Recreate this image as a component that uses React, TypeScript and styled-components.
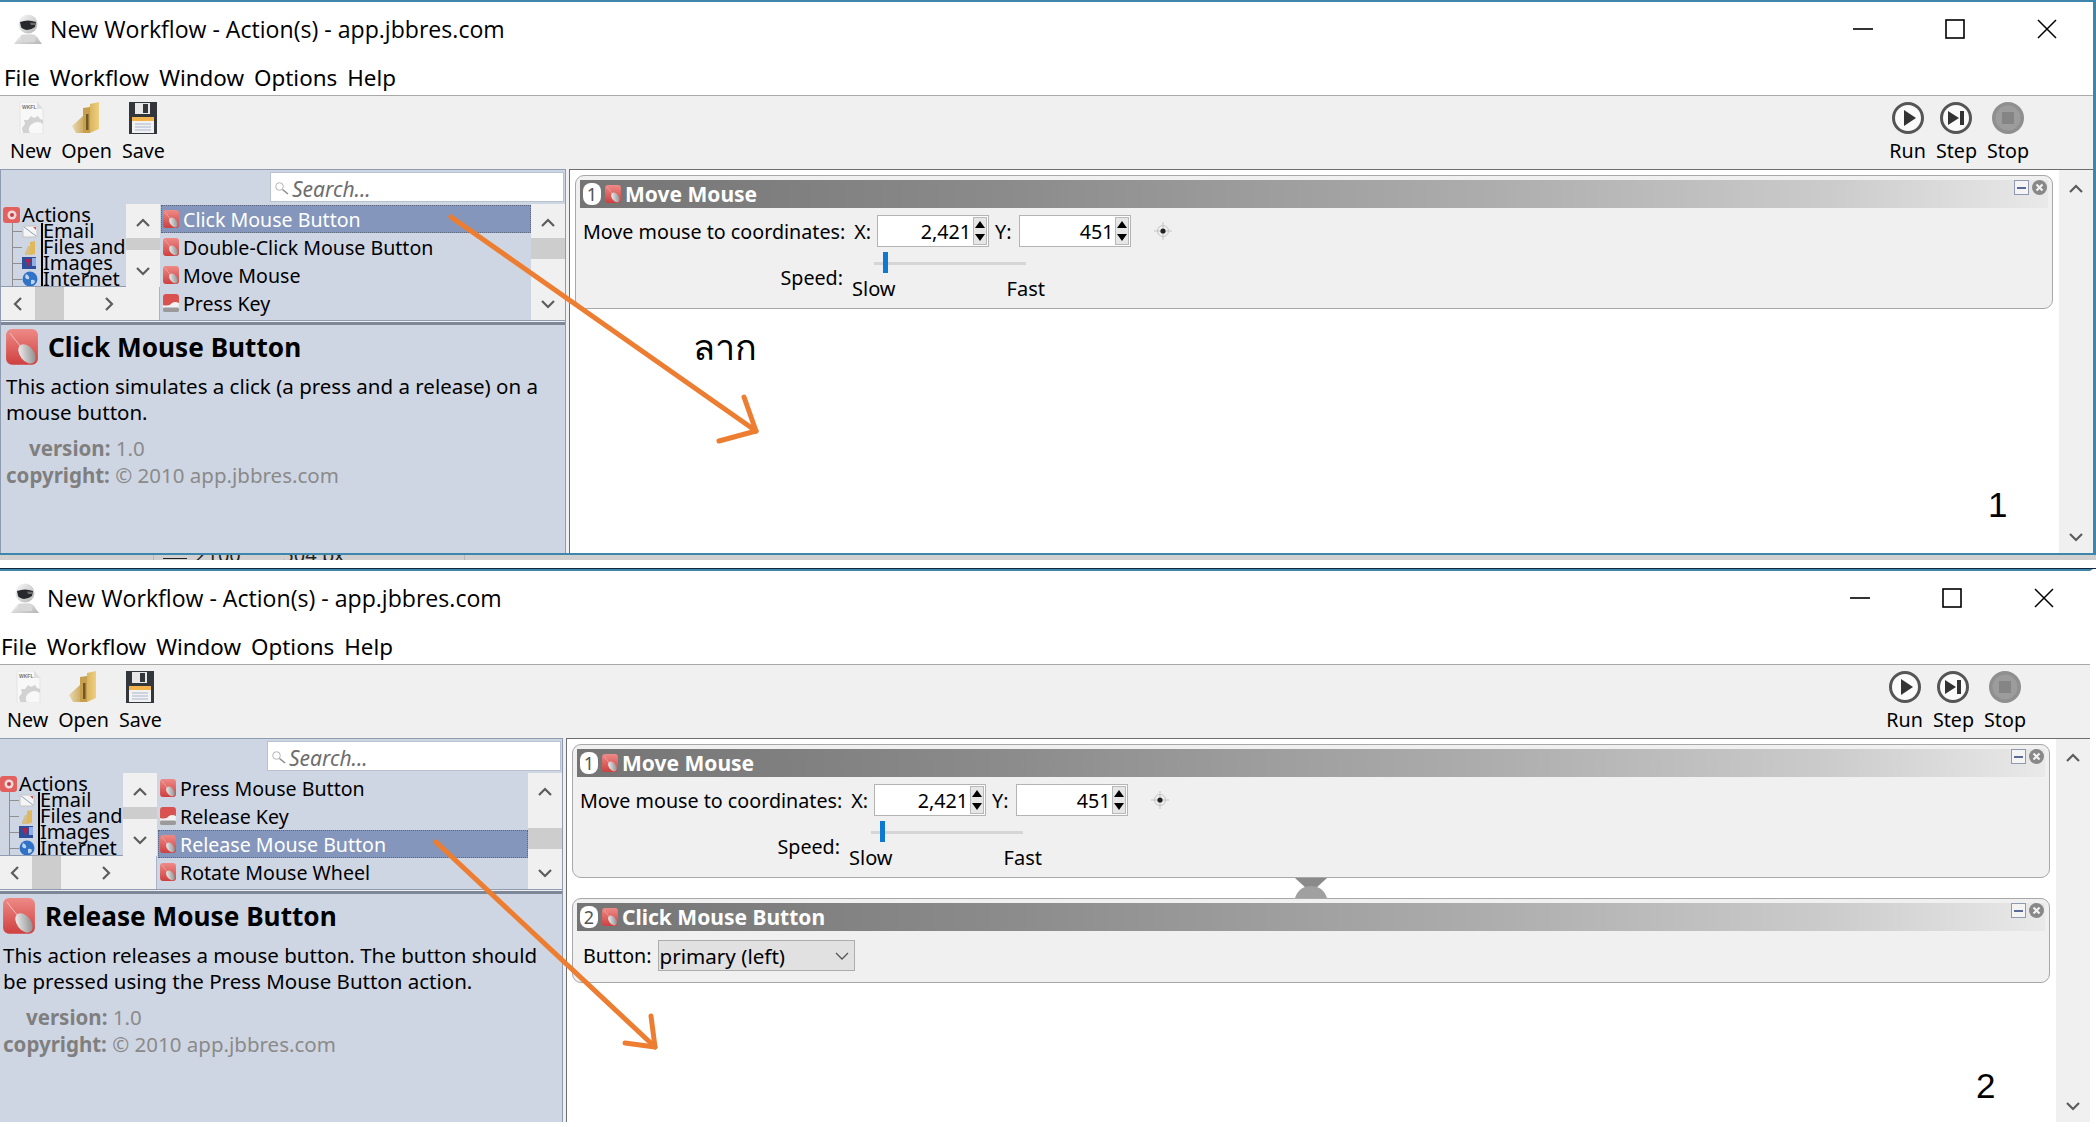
import * as React from 'react';
import styled, { createGlobalStyle } from 'styled-components';

const GlobalStyle = createGlobalStyle`
  html, body {
    margin: 0;
    padding: 0;
    background: #fff;
  }
  * { box-sizing: border-box; }
`

const UI_FONT = `"Noto Sans", "Liberation Sans", sans-serif`

const Page = styled.div`
  position: relative;
  width: 2096px;
  height: 1127px;
  overflow: hidden;
  background: #fff;
  font-family: ${UI_FONT};
  font-size: 19.7px;
  color: #000;
`

const WindowFrame = styled.div<{ $shift?: number; $edge?: boolean }>`
  width: 2096px;
  margin-left: ${p => -(p.$shift || 0)}px;
  border-top: 2px solid #3f86ad;
  border-right: ${p => (p.$edge ? '3px solid #3f86ad' : '3px solid transparent')};
  background: #fff;
`

const TitleBar = styled.div`
  height: 60px;
  padding: 0 35px 6px 13px;
  display: flex;
  align-items: center;
`

const TitleText = styled.div`
  margin-left: 7px;
  font-family: "Open Sans", "Noto Sans", sans-serif;
  font-size: 23.1px;
  flex: 1;
`

const WinControls = styled.div`
  display: flex;
  align-items: center;
  gap: 70px;
`

const MenuBar = styled.div`
  height: 34px;
  padding: 0 0 2px 4px;
  display: flex;
  align-items: center;
  gap: 10px;
  border-bottom: 1px solid #a9a9a9;
  font-size: 22.4px;
`

const Toolbar = styled.div`
  height: 73px;
  padding: 6px 64px 0 10px;
  display: flex;
  justify-content: space-between;
  background: #f0f0f0;
`

const ToolGroup = styled.div`
  display: flex;
  gap: 10px;
`

const ToolButton = styled.div`
  display: flex;
  flex-direction: column;
  align-items: center;
  gap: 3px;
  line-height: 28px;
  font-size: 19.7px;
  svg { display: block; height: 32px; }
`

const Main = styled.div`
  height: 384px;
  display: flex;
  background: #f0f0f0;
`

const LeftPanel = styled.div`
  width: 566px;
  height: 100%;
  flex: none;
  display: flex;
  flex-direction: column;
  background: #cfd6e3;
  border: 1px solid #8e9bb0;
  border-bottom: 0;
`

const SearchRow = styled.div`
  height: 34px;
  flex: none;
  padding: 2px 1px 2px 0;
  display: flex;
  justify-content: flex-end;
`

const SearchBox = styled.div`
  width: 294px;
  height: 30px;
  display: flex;
  align-items: center;
  gap: 2px;
  padding: 3px 0 0 3px;
  background: #fff;
  border: 1px solid #b8c1d0;
  color: #6d6d6d;
  font-style: italic;
  font-size: 21px;
`

const BrowserRow = styled.div`
  height: 116px;
  flex: none;
  display: flex;
`

const TreePane = styled.div`
  width: 159px;
  flex: none;
  display: grid;
  grid-template-columns: 125px 34px;
  grid-template-rows: 83px 33px;
  background: #f0f0f0;
  border-right: 1px solid #aab4c6;
`

const TreeList = styled.div`
  height: 83px;
  overflow: hidden;
  background: #cfd6e3;
  border-bottom: 1px solid #8e9bb0;
  padding-top: 3px;
`

const TreeRow = styled.div<{ $child?: boolean }>`
  height: 16px;
  display: flex;
  align-items: center;
  padding-left: ${p => (p.$child ? 21 : 2)}px;
  font-size: 20px;
  white-space: nowrap;
  background: ${p => (p.$child
    ? 'linear-gradient(#8f8f8f,#8f8f8f) 11px 8px / 10px 1px no-repeat, linear-gradient(#8f8f8f,#8f8f8f) 11px 0 / 1px 16px no-repeat'
    : 'none')};
  svg { flex: none; }
`

const TreeLabel = styled.span<{ $child?: boolean }>`
  margin-left: ${p => (p.$child ? 3 : 2)}px;
  border-left: ${p => (p.$child ? '2px solid #000' : '0')};
  line-height: 16px;
  height: 16px;
`

const VBar = styled.div<{ $width?: number }>`
  width: ${p => p.$width || 34}px;
  flex: none;
  display: flex;
  flex-direction: column;
  align-items: center;
  justify-content: space-between;
  background: #f0f0f0;
  padding: 12px 0 8px;
  position: relative;
`

const VThumb = styled.div<{ $top: number; $height: number }>`
  position: absolute;
  left: 0;
  right: 0;
  top: ${p => p.$top}px;
  height: ${p => p.$height}px;
  background: #cdcdcd;
`

const HBar = styled.div`
  grid-column: 1;
  display: flex;
  align-items: center;
  justify-content: space-between;
  padding: 0 9px 0 10px;
  background: #f0f0f0;
  position: relative;
`

const HThumb = styled.div`
  position: absolute;
  left: 34px;
  top: 0;
  bottom: 0;
  width: 29px;
  background: #cdcdcd;
`

const ActionList = styled.div`
  flex: 1;
  padding: 1px 0 0 1px;
`

const ActionRow = styled.div<{ $selected?: boolean }>`
  height: 28px;
  display: flex;
  align-items: center;
  gap: 4px;
  padding-left: 2px;
  font-size: 19.6px;
  white-space: nowrap;
  color: ${p => (p.$selected ? '#fff' : '#000')};
  background: ${p => (p.$selected ? '#8496bb' : 'transparent')};
  outline: ${p => (p.$selected ? '1px dotted #5b6780' : '0')};
  outline-offset: -1px;
`

const Splitter = styled.div`
  height: 5px;
  flex: none;
  background: #f0f0f0;
  border-top: 1px solid #8e9bb0;
  border-bottom: 3px solid #7d8797;
`

const Details = styled.div`
  flex: 1;
  padding: 5px 20px 0 5px;
`

const DetailTitle = styled.div`
  height: 34px;
  display: flex;
  align-items: center;
  gap: 10px;
  font-size: 26.2px;
  font-weight: 700;
`

const DetailBody = styled.div`
  margin-top: 9px;
  font-size: 20.5px;
  line-height: 26px;
`

const Meta = styled.div`
  margin-top: 10px;
  font-size: 20.5px;
  line-height: 26.5px;
  color: #8a8a8a;
  b { color: #7f7f7f; font-weight: 700; }
`

const MetaIndented = styled.div`
  padding-left: 23px;
`

const Gutter = styled.div`
  width: 3px;
  flex: none;
  background: #f0f0f0;
`

const Canvas = styled.div`
  flex: 1;
  display: flex;
  background: #fff;
  border-left: 1px solid #6e6e6e;
  border-top: 1px solid #6e6e6e;
`

const Stack = styled.div`
  flex: 1;
  padding: 5px 6px 0 5px;
`

const Card = styled.div`
  background: #f0f0f0;
  border: 1px solid #a8a8a8;
  border-radius: 9px;
  padding: 4px 4px 0;
  overflow: hidden;
`

const CardHeader = styled.div`
  height: 28px;
  display: flex;
  align-items: center;
  padding-left: 3px;
  background: linear-gradient(90deg, #747474 0%, #8c8c8c 30%, #adadad 62%, #cbcbcb 85%, #e9e9e9 100%);
  color: #fff;
  font-weight: 700;
  font-size: 21px;
  position: relative;
`

const StepBadge = styled.div`
  width: 18px;
  height: 22px;
  border-radius: 8px;
  background: #fff;
  color: #555;
  font-size: 18px;
  line-height: 22px;
  font-weight: 400;
  text-align: center;
  margin-right: 4px;
`

const CardTitle = styled.span`
  margin-left: 4px;
`

const CardTools = styled.div`
  position: absolute;
  right: 1px;
  top: 0;
  display: flex;
  align-items: center;
  gap: 3px;
`

const CollapseBox = styled.div`
  width: 15px;
  height: 15px;
  border: 1px solid #8f9ab0;
  background: #f4f4f4;
  display: flex;
  align-items: center;
  justify-content: center;
  &::before {
    content: '';
    width: 9px;
    height: 2px;
    background: #5a6a9a;
  }
`

const CoordRow = styled.div`
  height: 32px;
  margin-top: 7px;
  padding-left: 3px;
  display: flex;
  align-items: center;
  white-space: nowrap;
`

const CoordLabel = styled.span<{ $gap?: number }>`
  margin-left: ${p => p.$gap || 0}px;
`

const NumberField = styled.div<{ $gap?: number }>`
  width: 112px;
  height: 32px;
  margin-left: ${p => p.$gap || 0}px;
  display: flex;
  align-items: center;
  justify-content: flex-end;
  padding-right: 1px;
  background: #fff;
  border: 1px solid #b4b4b4;
`

const Spinner = styled.div`
  width: 14px;
  height: 28px;
  margin-left: 2px;
  border: 1px solid #b9b9b9;
  background: #e6e6e6;
  display: flex;
  flex-direction: column;
  align-items: center;
  justify-content: space-around;
`

const TriUp = styled.div`
  width: 0;
  height: 0;
  border-left: 5px solid transparent;
  border-right: 5px solid transparent;
  border-bottom: 7px solid #000;
`

const TriDown = styled(TriUp)`
  border-bottom: 0;
  border-top: 7px solid #000;
`

const Target = styled.div`
  margin-left: 23px;
  display: flex;
`

const SpeedRow = styled.div`
  height: 57px;
  margin-top: 4px;
  display: flex;
`

const SpeedLabel = styled.div`
  width: 263px;
  padding-top: 13px;
  text-align: right;
`

const SliderBox = styled.div`
  width: 193px;
  margin-left: 9px;
  position: relative;
`

const SliderTrack = styled.div`
  height: 3px;
  margin: 11px 0 0 22px;
  width: 152px;
  background: #d6d6d6;
`

const SliderThumb = styled.div`
  position: absolute;
  left: 31px;
  top: 1px;
  width: 5px;
  height: 21px;
  background: #0f78d0;
`

const SliderLabels = styled.div`
  margin-top: 12px;
  display: flex;
  justify-content: space-between;
  font-size: 20px;
  line-height: 24px;
`

const Connector = styled.div`
  height: 20px;
  display: flex;
  justify-content: center;
`

const SelectRow = styled.div`
  height: 31px;
  margin-top: 9px;
  margin-bottom: 11px;
  padding-left: 6px;
  display: flex;
  align-items: center;
  gap: 6px;
`

const SelectBox = styled.div`
  width: 197px;
  height: 31px;
  padding: 0 5px 0 1px;
  display: flex;
  align-items: center;
  justify-content: space-between;
  background: #e1e1e1;
  border: 1px solid #adadad;
  font-size: 20.6px;
`

const DesktopGap = styled.div`
  height: 16px;
  border-top: 2px solid #3f86ad;
  border-bottom: 1px solid #10263a;
  background: linear-gradient(#d0d0d0, #d0d0d0) 0 0 / 100% 5px no-repeat;
`

const ClippedStatus = styled.div`
  height: 5px;
  overflow: hidden;
  padding-left: 195px;
  font-size: 20px;
  line-height: 0;
  white-space: pre;
  color: #222;
  background:
    linear-gradient(#222, #222) 163px 3px / 24px 1px no-repeat,
    linear-gradient(#b5b5b5, #b5b5b5) 153px 0 / 1px 5px no-repeat,
    linear-gradient(#b5b5b5, #b5b5b5) 464px 0 / 1px 5px no-repeat;
`

const Ink = styled.svg`
  position: absolute;
  left: 0;
  top: 0;
  pointer-events: none;
`

const Note = styled.div<{ $x: number; $y: number; $size: number }>`
  position: absolute;
  left: ${p => p.$x}px;
  top: ${p => p.$y}px;
  font-size: ${p => p.$size}px;
  line-height: 1;
  font-family: "Liberation Sans", "Noto Sans", sans-serif;
`

const Chevron: React.FC<{ dir: 'up' | 'down' | 'left' | 'right' }> = ({ dir }) => {
  const pts = {
    up: '2,10 8,4 14,10',
    down: '2,5 8,11 14,5',
    left: '10,2 4,8 10,14',
    right: '5,2 11,8 5,14'
  }[dir]
  return <svg width="16" height="16" viewBox="0 0 16 16" style={{ position: 'relative' }}>
    <polyline points={pts} fill="none" stroke="#5c5c5c" strokeWidth="2.2" />
  </svg>
}

const Robot = () => <svg width="30" height="30" viewBox="0 0 30 30">
  <defs>
    <linearGradient id="helmet" x1="0" y1="0" x2="1" y2="1"><stop offset="0" stopColor="#fafafa" /><stop offset="1" stopColor="#b4b4b4" /></linearGradient>
  </defs>
  <path d="M1 30 L4 26 Q7 21 11 20 L19 20 Q24 21 26 26 L29 30 Z" fill="url(#helmet)" />
  <path d="M8 21 H22 V28 H8 Z" fill="#d8d8d8" />
  <circle cx="15" cy="10" r="9.5" fill="url(#helmet)" />
  <path d="M7 8 Q15 5 23 8 L22 13 Q18 16 14 16 Q9 15 8 13 Z" fill="#26282c" />
  <path d="M17 8.5 L23 9 L22 11 L18 11 Z" fill="#6b6b6b" />
</svg>

const WinMin = () => <svg width="22" height="22" viewBox="0 0 22 22"><path d="M1 11 H21" stroke="#000" strokeWidth="1.6" /></svg>
const WinMax = () => <svg width="22" height="22" viewBox="0 0 22 22"><rect x="2" y="2" width="18" height="18" fill="none" stroke="#000" strokeWidth="1.6" /></svg>
const WinClose = () => <svg width="22" height="22" viewBox="0 0 22 22"><path d="M2 2 L20 20 M20 2 L2 20" stroke="#000" strokeWidth="1.5" /></svg>

const DocIcon = () => <svg width="30" height="32" viewBox="0 0 30 32">
  <path d="M4 0 H21 L27 7 V32 H4 Z" fill="#f8f8f8" stroke="#e4e4e4" />
  <path d="M21 0 V7 H27" fill="#dfdfdf" />
  <text x="6" y="7" fontSize="5" fontWeight="700" fill="#777" fontFamily="Liberation Sans">WKFL</text>
  <path d="M6 26 L9 22 L8 18 L12 18 L15 14 L18 16 L22 14 L24 17 L27 18 V22 A9 9 0 0 0 16 22 A6 6 0 0 0 14 31 H7 Z" fill="#d2d2d2" />
</svg>

const FolderIcon = () => <svg width="32" height="32" viewBox="0 0 32 32">
  <defs>
    <linearGradient id="flap" x1="0" y1="0" x2="1" y2="0"><stop offset="0" stopColor="#e8d9b4" /><stop offset="1" stopColor="#cfae66" /></linearGradient>
    <linearGradient id="back" x1="0" y1="0" x2="1" y2="0"><stop offset="0" stopColor="#d9b562" /><stop offset="1" stopColor="#efd07e" /></linearGradient>
  </defs>
  <path d="M1 24 L12 14 V31 L5 31 Z" fill="url(#flap)" />
  <path d="M12 6 L19 5 V31 L12 31 Z" fill="#c79f4e" />
  <path d="M19 2 L28 0 V27 L19 31 Z" fill="url(#back)" />
  <path d="M15 12 H17.5 V28 H15 Z" fill="#6f5726" />
</svg>

const DiskIcon = () => <svg width="30" height="32" viewBox="0 0 30 32">
  <path d="M1 0 H29 V32 H1 Z" fill="#33363a" />
  <rect x="7" y="1" width="15" height="11" fill="#e8e8e8" />
  <rect x="15" y="2" width="5" height="9" fill="#33363a" />
  <rect x="4" y="15" width="22" height="16" fill="#f2f2f2" />
  <rect x="4" y="15" width="22" height="4" fill="#f2b24c" />
  <path d="M7 22 H23 M7 25 H23 M7 28 H23" stroke="#a9b6cc" strokeWidth="1.2" />
</svg>

const RoundIcon: React.FC<{ kind: 'run' | 'step' | 'stop' }> = ({ kind }) => {
  if (kind === 'stop') {
    return <svg width="32" height="32" viewBox="0 0 32 32">
      <circle cx="16" cy="16" r="16" fill="#8f8f8f" />
      <circle cx="16" cy="16" r="12.5" fill="#9c9c9c" />
      <rect x="10" y="10" width="12" height="12" fill="#858585" />
    </svg>
  }
  return <svg width="32" height="32" viewBox="0 0 32 32">
    <circle cx="16" cy="16" r="14.5" fill="#fafafa" stroke="#555" strokeWidth="3" />
    {kind === 'run' && <path d="M12 8 L24 16 L12 24 Z" fill="#333" />}
    {kind === 'step' && <path d="M8 9 L19 16 L8 23 Z M20 9 H24 V23 H20 Z" fill="#333" />}
  </svg>
}

const MouseIcon: React.FC<{ size: number }> = ({ size }) => <svg width={size} height={size * 1.12} viewBox="0 0 32 36" style={{ flex: 'none' }}>
  <defs>
    <linearGradient id="redTile" x1="0" y1="0" x2="0" y2="1"><stop offset="0" stopColor="#ee8a86" /><stop offset="1" stopColor="#cf4040" /></linearGradient>
    <linearGradient id="mouseBody" x1="0" y1="0" x2="1" y2="1"><stop offset="0" stopColor="#fdfdfd" /><stop offset="1" stopColor="#7f7f7f" /></linearGradient>
  </defs>
  <rect width="32" height="36" rx="6" fill="url(#redTile)" />
  <path d="M4 4 C8 10 12 14 15 18" fill="none" stroke="#f3c4c2" strokeWidth="1" />
  <ellipse cx="21" cy="25" rx="7" ry="11" transform="rotate(-38 21 25)" fill="url(#mouseBody)" />
</svg>

const KeyIcon: React.FC<{ size: number }> = ({ size }) => <svg width={size} height={size * 1.12} viewBox="0 0 32 36" style={{ flex: 'none' }}>
  <rect width="32" height="36" rx="6" fill="#d9524f" />
  <path d="M0 22 Q12 26 18 18 Q24 14 32 18 V30 Q32 36 26 36 H6 Q0 36 0 30 Z" fill="#f2f2f2" />
  <rect y="27" width="32" height="9" rx="3" fill="#9a9a9a" />
</svg>

const MiniMail = () => <svg width="16" height="15" viewBox="0 0 16 15"><path d="M1 2 H15 V13 H1 Z" fill="#f5f5f5" stroke="#c4c4c4" /><path d="M2 3 L14 12" stroke="#8aa0bd" /><path d="M11 3 h3 v3 z" fill="#c55" /></svg>
const MiniFolder = () => <svg width="16" height="15" viewBox="0 0 16 15"><path d="M3 13 L6 6 H8 V15 H3 Z" fill="#d5c08a" /><path d="M8 2 L13 1 V14 L8 15 Z" fill="#e0b95e" /></svg>
const MiniImages = () => <svg width="16" height="15" viewBox="0 0 16 15"><rect y="1" width="14" height="12" fill="#2d4e9a" /><path d="M3 3 L9 3 L7 11 Z" fill="#b0224b" /><rect x="10" y="2" width="4" height="8" fill="#8fb0e4" /></svg>
const MiniGlobe = () => <svg width="16" height="16" viewBox="0 0 16 16"><circle cx="8" cy="8" r="7.5" fill="#2f72c8" /><path d="M4 3 Q8 5 7 8 Q4 9 3 6 Z M9 9 Q13 8 13 11 Q11 14 9 13 Z" fill="#bcd6f2" /></svg>
const MiniActions = () => <svg width="17" height="16" viewBox="0 0 17 16"><rect width="17" height="16" rx="3" fill="#e2605e" /><circle cx="9" cy="8" r="4.5" fill="#f1d9d9" /><circle cx="9" cy="8" r="2" fill="#c93f3f" /></svg>

const Magnifier = () => <svg width="16" height="16" viewBox="0 0 16 16"><circle cx="5.5" cy="5.5" r="3.8" fill="#fff" stroke="#b5b5b5" /><path d="M8.5 8.5 L14 13" stroke="#8d8d8d" strokeWidth="1.6" /></svg>

const TargetIcon = () => <svg width="18" height="18" viewBox="0 0 18 18">
  <circle cx="9" cy="9" r="5.5" fill="none" stroke="#c4c4c4" />
  <path d="M9 0 V18 M0 9 H18" stroke="#c4c4c4" />
  <circle cx="9" cy="9" r="2.6" fill="#222" />
</svg>

const CloseDot = () => <svg width="15" height="15" viewBox="0 0 15 15">
  <circle cx="7.5" cy="7.5" r="7.5" fill="#888" />
  <path d="M4.5 4.5 L10.5 10.5 M10.5 4.5 L4.5 10.5" stroke="#f2f2f2" strokeWidth="2.2" />
</svg>

const Hourglass = () => <svg width="32" height="20" viewBox="0 0 32 20">
  <path d="M0 0 H32 L20 11 H12 Z" fill="#8a8a8a" />
  <path d="M0 20 Q4 8 16 8 Q28 8 32 20 Z" fill="#a0a0a0" />
</svg>

const ChevronSmall = () => <svg width="14" height="10" viewBox="0 0 14 10"><polyline points="1,2 7,8 13,2" fill="none" stroke="#555" strokeWidth="1.3" /></svg>

interface ActionItem { name: string; key?: boolean; selected?: boolean }

const StepCard: React.FC<{ index: number; title: string; children: React.ReactNode }> = ({ index, title, children }) => (
  <Card>
    <CardHeader>
      <StepBadge>{index}</StepBadge>
      <MouseIcon size={16} />
      <CardTitle>{title}</CardTitle>
      <CardTools><CollapseBox /><CloseDot /></CardTools>
    </CardHeader>
    {children}
  </Card>
)

const MoveMouseBody = () => <>
  <CoordRow>
    <span>Move mouse to coordinates:</span>
    <CoordLabel $gap={9}>X:</CoordLabel>
    <NumberField $gap={6}>2,421<Spinner><TriUp /><TriDown /></Spinner></NumberField>
    <CoordLabel $gap={6}>Y:</CoordLabel>
    <NumberField $gap={8}>451<Spinner><TriUp /><TriDown /></Spinner></NumberField>
    <Target><TargetIcon /></Target>
  </CoordRow>
  <SpeedRow>
    <SpeedLabel>Speed:</SpeedLabel>
    <SliderBox>
      <SliderTrack />
      <SliderThumb />
      <SliderLabels><span>Slow</span><span>Fast</span></SliderLabels>
    </SliderBox>
  </SpeedRow>
</>

interface WorkflowWindowProps {
  shift?: number
  edge?: boolean
  items: ActionItem[]
  thumbTop: number
  detailTitle: string
  detailBody: string
  withClick?: boolean
}

const WorkflowWindow: React.FC<WorkflowWindowProps> = ({ shift, edge, items, thumbTop, detailTitle, detailBody, withClick }) => (
  <WindowFrame $shift={shift} $edge={edge}>
    <TitleBar>
      <Robot />
      <TitleText>New Workflow - Action(s) - app.jbbres.com</TitleText>
      <WinControls><WinMin /><WinMax /><WinClose /></WinControls>
    </TitleBar>
    <MenuBar>
      <span>File</span><span>Workflow</span><span>Window</span><span>Options</span><span>Help</span>
    </MenuBar>
    <Toolbar>
      <ToolGroup>
        <ToolButton><DocIcon />New</ToolButton>
        <ToolButton><FolderIcon />Open</ToolButton>
        <ToolButton><DiskIcon />Save</ToolButton>
      </ToolGroup>
      <ToolGroup>
        <ToolButton><RoundIcon kind="run" />Run</ToolButton>
        <ToolButton><RoundIcon kind="step" />Step</ToolButton>
        <ToolButton><RoundIcon kind="stop" />Stop</ToolButton>
      </ToolGroup>
    </Toolbar>
    <Main>
      <LeftPanel>
        <SearchRow>
          <SearchBox><Magnifier />Search...</SearchBox>
        </SearchRow>
        <BrowserRow>
          <TreePane>
            <TreeList>
              <TreeRow><MiniActions /><TreeLabel>Actions</TreeLabel></TreeRow>
              <TreeRow $child><MiniMail /><TreeLabel $child>Email</TreeLabel></TreeRow>
              <TreeRow $child><MiniFolder /><TreeLabel $child>Files and</TreeLabel></TreeRow>
              <TreeRow $child><MiniImages /><TreeLabel $child>Images</TreeLabel></TreeRow>
              <TreeRow $child><MiniGlobe /><TreeLabel $child>Internet</TreeLabel></TreeRow>
            </TreeList>
            <VBar>
              <VThumb $top={34} $height={12} />
              <Chevron dir="up" />
              <Chevron dir="down" />
            </VBar>
            <HBar>
              <HThumb />
              <Chevron dir="left" />
              <Chevron dir="right" />
            </HBar>
          </TreePane>
          <ActionList>
            {items.map(item => (
              <ActionRow key={item.name} $selected={item.selected}>
                {item.key ? <KeyIcon size={16} /> : <MouseIcon size={16} />}
                {item.name}
              </ActionRow>
            ))}
          </ActionList>
          <VBar>
            <VThumb $top={thumbTop} $height={21} />
            <Chevron dir="up" />
            <Chevron dir="down" />
          </VBar>
        </BrowserRow>
        <Splitter />
        <Details>
          <DetailTitle><MouseIcon size={32} />{detailTitle}</DetailTitle>
          <DetailBody>{detailBody}</DetailBody>
          <Meta>
            <MetaIndented><b>version:</b> 1.0</MetaIndented>
            <div><b>copyright:</b> © 2010 app.jbbres.com</div>
          </Meta>
        </Details>
      </LeftPanel>
      <Gutter />
      <Canvas>
        <Stack>
          <StepCard index={1} title="Move Mouse"><MoveMouseBody /></StepCard>
          {withClick && <>
            <Connector><Hourglass /></Connector>
            <StepCard index={2} title="Click Mouse Button">
              <SelectRow>
                <span>Button:</span>
                <SelectBox>primary (left)<ChevronSmall /></SelectBox>
              </SelectRow>
            </StepCard>
          </>}
        </Stack>
        <VBar>
          <Chevron dir="up" />
          <Chevron dir="down" />
        </VBar>
      </Canvas>
    </Main>
  </WindowFrame>
)

const firstItems: ActionItem[] = [
  { name: 'Click Mouse Button', selected: true },
  { name: 'Double-Click Mouse Button' },
  { name: 'Move Mouse' },
  { name: 'Press Key', key: true }
]

const secondItems: ActionItem[] = [
  { name: 'Press Mouse Button' },
  { name: 'Release Key', key: true },
  { name: 'Release Mouse Button', selected: true },
  { name: 'Rotate Mouse Wheel' }
]

const App: React.FC = () => <>
  <GlobalStyle />
  <Page>
    <WorkflowWindow
      edge
      items={firstItems}
      thumbTop={34}
      detailTitle="Click Mouse Button"
      detailBody="This action simulates a click (a press and a release) on a mouse button."
    />
    <DesktopGap>
      <ClippedStatus>2100        504 px</ClippedStatus>
    </DesktopGap>
    <WorkflowWindow
      shift={3}
      items={secondItems}
      thumbTop={55}
      detailTitle="Release Mouse Button"
      detailBody="This action releases a mouse button. The button should be pressed using the Press Mouse Button action."
      withClick
    />
    <Ink width="2096" height="1127" viewBox="0 0 2096 1127">
      <g fill="none" stroke="#ed7d31" strokeWidth="5" strokeLinecap="round" strokeLinejoin="round">
        <path d="M451 217 L756 431" />
        <path d="M744 397 L756 431 L719 441" />
        <path d="M436 842 L655 1047" />
        <path d="M651 1016 L655 1047 L625 1043" />
      </g>
    </Ink>
    <Note $x={693} $y={330} $size={36}>ลาก</Note>
    <Note $x={1988} $y={487} $size={35}>1</Note>
    <Note $x={1976} $y={1068} $size={35}>2</Note>
  </Page>
</>

export default App
